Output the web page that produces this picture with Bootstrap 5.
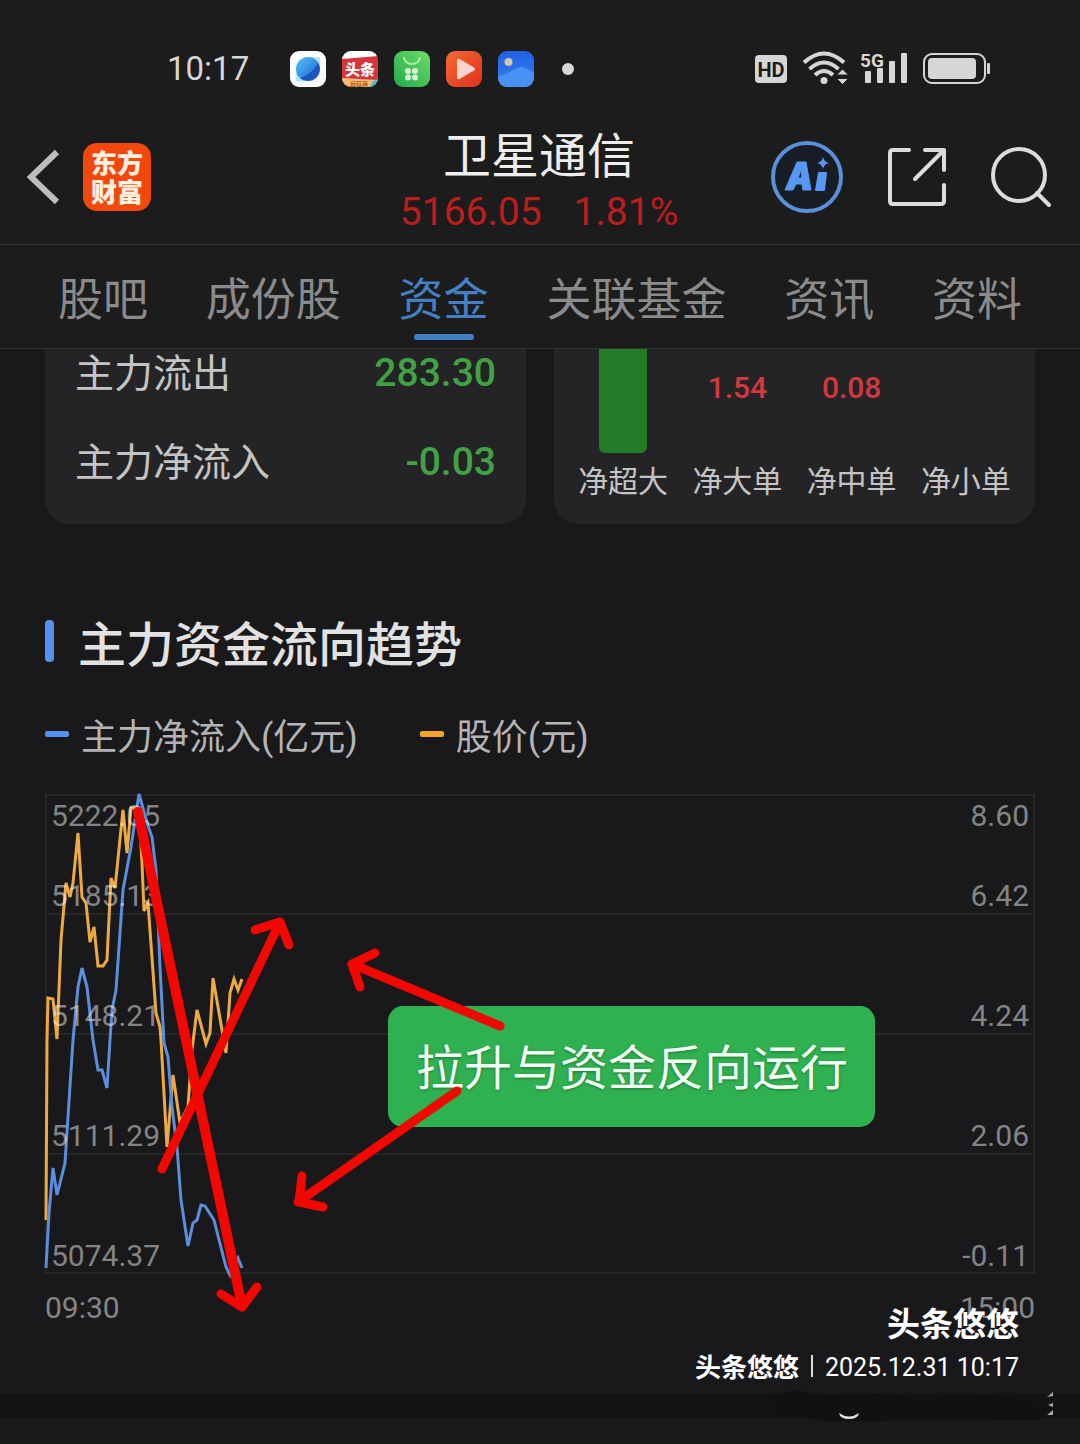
<!DOCTYPE html>
<html lang="zh-CN" data-bs-theme="dark">
<head>
<meta charset="utf-8">
<meta name="viewport" content="width=device-width, initial-scale=1">
<title>卫星通信</title>
<link href="https://cdn.jsdelivr.net/npm/bootstrap@5.3.0/dist/css/bootstrap.min.css" rel="stylesheet">
<style>
  :root { --edge: 45px; --line: #323230; --green: #41a244; --red: #d4383f; }
  body { font-family: Roboto, "Noto Sans CJK SC", sans-serif; background: #19191b; color: #c4c4c4; min-height: 100vh; line-height: 1.2; }
  button { background: none; border: 0; padding: 0; color: inherit; }
  svg { display: block; flex: none; overflow: visible; }
  .top-shell { background: #1c1c1c; }
  .status-row { height: 110px; padding: 28px 90px 0 167px; color: #d6d6d6; }
  .status-time { font-size: 33px; width: 123px; }
  .app-bar { height: 135px; padding: 0 28px 0 26px; border-bottom: 1px solid var(--line); }
  .side-slot { flex: 1 1 0; }
  .tool-slot { gap: 43px; }
  .brand-tile { width: 68px; height: 68px; border-radius: 14px; background: #f2480c; color: #fff1e2; font-size: 26px; font-weight: 900; line-height: 29px; padding-top: 3px; }
  .quote-block { padding-top: 14px; }
  .quote-name { font-size: 48px; line-height: 56px; color: #eee; font-weight: 400; }
  .quote-nums { font-size: 39px; line-height: 54px; color: #bd1d1d; gap: 32px; }
  .tab-row { height: 104px; padding: 0 58px; border-bottom: 1px solid var(--line); }
  .tab-row a { font-size: 45px; line-height: 54px; color: #8b8b8d; text-decoration: none; position: relative; padding-top: 29px; }
  .tab-row a.active { color: #4580c4; }
  .tab-row a.active::after { content: ""; position: absolute; left: 50%; bottom: 8px; width: 60px; height: 6px; margin-left: -30px; border-radius: 3px; background: #3f7fc4; }
  .panels { display: grid; grid-template-columns: 1fr 1fr; gap: 28px; padding: 0 var(--edge); }
  .panel { background: #242426; border-radius: 0 0 24px 24px; height: 175px; }
  .flow-list { padding: 0 30px; font-size: 39px; line-height: 48px; gap: 41px; }
  .flow-list dt { padding-top: 2px; line-height: 46px; font-weight: 400; }
  .flow-list dd { color: var(--green); font-weight: 500; }
  .order-bars { padding: 0 12px; }
  .order-item { flex: 1 1 0; font-size: 30px; line-height: 38px; }
  .order-plot { height: 114px; }
  .order-plot span { color: var(--red); font-weight: 500; padding-top: 20px; }
  .bar-down { width: 48px; height: 104px; border-radius: 0 0 6px 6px; background: #247c28; }
  .trend { padding: 93px var(--edge) 0; }
  .trend h2 { font-size: 48px; line-height: 58px; font-weight: 500; color: #e2e2e2; gap: 24px; }
  .trend h2::before { content: ""; width: 9px; height: 42px; border-radius: 4px; background: #5590ee; margin-top: -10px; }
  .legend-row { font-size: 36px; line-height: 44px; gap: 62px; margin-top: 41px; color: #b4b4b6; }
  .legend-row span { gap: 12px; }
  .legend-row span::before { content: ""; width: 24px; height: 6px; border-radius: 2px; background: var(--key); margin-top: -8px; }
  .key-flow { --key: #5590ee; }
  .key-price { --key: #f2a52d; }
  .plot { height: 478px; margin-top: 35px; color: #ffffff78; font-size: 30px; line-height: 36px; }
  .plot svg { width: 100%; height: 100%; }
  .scale-col { position: absolute; top: 3px; bottom: 0; padding: 0 6px; z-index: 1; }
  .scale-col span + span { margin-top: 84px; }
  .scale-col span:nth-child(2) { margin-top: 44px; }
  .callout { position: absolute; z-index: 1; left: 343px; top: 211px; padding: 34px 27px 29px 28px; border-radius: 15px; background: #30b151; color: #f2fff4; font-size: 48px; line-height: 58px; text-shadow: 0 1px 3px #0005; white-space: nowrap; }
  .marks { position: absolute; left: 0; top: 0; z-index: 2; }
  .time-row { font-size: 30px; line-height: 36px; margin-top: 17px; color: #858587; }
  .stamp { position: absolute; right: 61px; bottom: 30px; color: #fff; font-weight: 700; font-size: 33px; line-height: 46px; }
  .stamp-line { font-size: 26px; line-height: 40px; gap: 12px; }
  .stamp-line time { font-weight: 400; font-size: 25px; }
  .stamp-rule { width: 2px; height: 22px; background: #ddd; margin-top: -4px; }
  .divider { height: 24px; margin-top: 68px; background: #131313; }
  .divider svg { position: absolute; right: 20px; top: -8px; }
</style>
</head>
<body>
<header class="top-shell">
  <div class="status-row d-flex align-items-center">
    <div class="status-time">10:17</div>
    <svg width="288" height="36" viewBox="0 0 288 36" aria-hidden="true">
      <defs>
        <linearGradient id="g1" x1="0" y1="0" x2="1" y2="1"><stop stop-color="#5bc3f8"/><stop offset=".6" stop-color="#2e86e2"/><stop offset="1" stop-color="#1746a8"/></linearGradient>
        <linearGradient id="g2" x1="1" y1="0" x2="0" y2="1"><stop stop-color="#6fdc63"/><stop offset="1" stop-color="#22aa50"/></linearGradient>
        <linearGradient id="g3" x1="0" y1="0" x2="1" y2="1"><stop stop-color="#f46a31"/><stop offset="1" stop-color="#e1301d"/></linearGradient>
        <linearGradient id="g4" x1="0" y1="0" x2="0" y2="1"><stop stop-color="#1f5fe6"/><stop offset="1" stop-color="#3b82ee"/></linearGradient>
        <clipPath id="c1"><rect x="52" width="36" height="36" rx="9"/></clipPath>
        <clipPath id="c2"><rect x="208" width="36" height="36" rx="9"/></clipPath>
      </defs>
      <rect width="36" height="36" rx="9" fill="#fafcff"/>
      <path d="M6 30c-1-4 0-7 0-12A12 12 0 0 1 18 6c5 0 8 0 12 0 0 4 0 8 0 12a12 12 0 0 1-12 12c-5 0-8 1-12 0z" fill="#b8e2fb"/>
      <circle cx="18" cy="18" r="12" fill="url(#g1)"/><path d="M10 27Q23 23 28 12A12 12 0 0 1 10 27z" fill="#1c55bc"/>
      <g clip-path="url(#c1)"><rect x="52" width="36" height="36" fill="#d7343c"/><path d="M52 0h36v5l-36 3z" fill="#fff"/><path d="M52 27l36 2v7H52z" fill="#f3bd75"/><path d="M80 36q2-7 8-8v8z" fill="#53b7d1"/></g>
      <text x="70" y="24" text-anchor="middle" font-size="15" font-weight="900" fill="#fff">头条</text>
      <text x="69" y="35" text-anchor="middle" font-size="6" font-weight="700" fill="#a55c23">远征商</text>
      <rect x="104" width="36" height="36" rx="9" fill="url(#g2)"/><path d="M114 6a8 7 0 0 0 16 0" fill="none" stroke="#a8f2a8" stroke-width="2"/>
      <g fill="#d3f7d4"><circle cx="118" cy="20" r="3"/><circle cx="125" cy="20" r="3"/><circle cx="118" cy="26.500" r="3"/><circle cx="125" cy="26.500" r="3"/></g>
      <rect x="156" width="36" height="36" rx="9" fill="url(#g3)"/><path d="M167 9.500Q167 7 169.500 8L184 16.500q2 1.500 0 3L169.500 28Q167 29 167 26.500z" fill="#fcd6cc"/>
      <g clip-path="url(#c2)"><rect x="208" width="36" height="36" fill="url(#g4)"/><path d="M208 25c10-1 17-9 23-9 5 0 8 4 13 5v15h-36z" fill="#4a91f6"/><circle cx="218.500" cy="11" r="4" fill="#d4c5a5"/></g>
      <circle cx="278" cy="18" r="6" fill="#d6d6d6"/>
    </svg>
    <svg class="ms-auto" width="236" height="40" viewBox="0 -2 236 40" fill="#d6d6d6" aria-label="HD 5G">
      <rect x="1" y="4" width="32" height="28" rx="4"/>
      <text x="17" y="26" text-anchor="middle" font-size="20" font-weight="700" fill="#1c1c1c">HD</text>
      <g fill="none" stroke="#d6d6d6" stroke-width="4"><path d="M50 11.500q20-18 40 0"/><path d="M55.500 18q14.500-13 29 0"/><path d="M61 24q9-8 18 0"/></g>
      <circle cx="70" cy="29.500" r="3.500"/>
      <path d="M82.500 24l6-6 6 6zM82.500 27.500l6 6 6-6z" stroke="#1c1c1c" stroke-width="1"/>
      <rect x="111" y="20" width="6" height="12" rx="1"/><rect x="123" y="17" width="6" height="15" rx="1"/><rect x="135" y="10" width="6" height="22" rx="1"/><rect x="147" y="2" width="6" height="30" rx="1"/>
      <text x="106" y="16" font-size="19" font-weight="700" stroke="#1c1c1c" stroke-width="2" paint-order="stroke">5G</text>
      <rect x="170" y="3" width="61" height="29" rx="8" fill="none" stroke="#d6d6d6" stroke-width="2"/>
      <rect x="174" y="7" width="48" height="21" rx="4"/><rect x="233" y="12" width="3" height="11" rx="1"/>
    </svg>
  </div>

  <div class="app-bar d-flex align-items-center">
    <div class="side-slot d-flex align-items-center gap-4">
      <button type="button" aria-label="返回"><svg width="33" height="56" viewBox="0 0 33 56" fill="none" stroke="#bdbdbd" stroke-width="6"><path d="M31 3L5 28l26 25"/></svg></button>
      <div class="brand-tile d-flex flex-column align-items-center justify-content-center"><span>东方</span><span>财富</span></div>
    </div>
    <div class="quote-block text-center">
      <h1 class="quote-name m-0">卫星通信</h1>
      <div class="quote-nums d-flex justify-content-center"><span>5166.05</span><span>1.81%</span></div>
    </div>
    <div class="side-slot tool-slot d-flex align-items-center justify-content-end">
      <button type="button" aria-label="Ai"><svg width="74" height="74" viewBox="0 0 74 74"><circle cx="37" cy="37" r="34" fill="#181c24" stroke="#5a8fda" stroke-width="4"/><g fill="#5797f5" stroke="#5797f5" stroke-linejoin="round"><path fill-rule="evenodd" d="M15 50L27 22h9l5 28h-8l-1-6h-6l-3 6zM28 38h4l-1-8z" stroke-width="1"/><path d="M49 33h7l-2 17h-8z" stroke-width="2"/><path d="M53 17q1 5 6 6-5 1-6 6-1-5-6-6 5-1 6-6z" stroke-width="0"/></g></svg></button>
      <button type="button" aria-label="分享"><svg width="60" height="60" viewBox="0 0 60 60" fill="none" stroke="#dcdcdc" stroke-width="4" stroke-linecap="round" stroke-linejoin="round"><path d="M22 3H6Q3 3 3 6v48q0 3 3 3h48q3 0 3-3V38M38 3h19v20M57 3L28 32"/></svg></button>
      <button type="button" aria-label="搜索"><svg width="62" height="62" viewBox="0 0 62 62" fill="none" stroke="#dcdcdc" stroke-width="4" stroke-linecap="round"><circle cx="29" cy="29" r="26"/><path d="M47 47l12 12"/></svg></button>
    </div>
  </div>

  <nav class="tab-row d-flex justify-content-between">
    <a href="#">股吧</a><a href="#">成份股</a><a href="#" class="active" aria-current="page">资金</a><a href="#">关联基金</a><a href="#">资讯</a><a href="#">资料</a>
  </nav>
</header>

<main>
  <section class="panels">
    <dl class="panel flow-list d-flex flex-column m-0">
      <div class="d-flex justify-content-between"><dt>主力流出</dt><dd class="m-0">283.30</dd></div>
      <div class="d-flex justify-content-between"><dt>主力净流入</dt><dd class="m-0">-0.03</dd></div>
    </dl>
    <div class="panel order-bars d-flex">
      <div class="order-item text-center"><div class="order-plot d-flex justify-content-center"><div class="bar-down"></div></div>净超大</div>
      <div class="order-item text-center"><div class="order-plot d-flex justify-content-center"><span>1.54</span></div>净大单</div>
      <div class="order-item text-center"><div class="order-plot d-flex justify-content-center"><span>0.08</span></div>净中单</div>
      <div class="order-item text-center"><div class="order-plot"></div>净小单</div>
    </div>
  </section>

  <section class="trend">
    <h2 class="d-flex align-items-center m-0">主力资金流向趋势</h2>
    <div class="legend-row d-flex">
      <span class="key-flow d-flex align-items-center">主力净流入(亿元)</span>
      <span class="key-price d-flex align-items-center">股价(元)</span>
    </div>
    <div class="plot position-relative">
      <div class="scale-col start-0 d-flex flex-column"><span>5222.05</span><span>5185.13</span><span>5148.21</span><span>5111.29</span><span>5074.37</span></div>
      <div class="scale-col end-0 d-flex flex-column text-end"><span>8.60</span><span>6.42</span><span>4.24</span><span>2.06</span><span>-0.11</span></div>
      <svg viewBox="45 795 990 478" preserveAspectRatio="xMinYMin meet" fill="none" aria-hidden="true">
        <path d="M46 795H1034V1273H46zM46 914H1034M46 1034H1034M46 1154H1034" stroke="#262628" stroke-width="2"/>
        <polyline stroke="#edaa42" stroke-width="3" points="46,1220 47,1040 48,998 53,999 57,1039 61,940 66,883 70,897 73,883 78,833 82,897 86,903 90,942 94,927 98,966 103,966 107,960 111,878 115,888 123,810 127,853 131,808 139,808 142,863 144,911 148,903 156,1013 160,1027 161,1040 167,1147 173,1075 180,1123 188,1107 192,1050 197,1010 206,1044 210,1033 213,978 226,1053 230,993 234,979 238,990 242,979"/>
        <polyline stroke="#5b8edb" stroke-width="3" points="46,1268 49,1213 53,1168 57,1195 65,1163 73,1040 78,987 82,968 87,987 93,1040 98,1070 102,1070 107,1088 110,1040 112,1010 116,990 123,890 131,847 139,794 147,823 152,837 156,870 160,967 164,1043 168,1057 172,1107 177,1147 181,1200 188,1246 193,1223 197,1220 201,1205 205,1206 214,1220 226,1267 230,1275 238,1258 242,1268"/>
      </svg>
      <div class="callout">拉升与资金反向运行</div>
      <svg class="marks" viewBox="45 795 990 478" preserveAspectRatio="xMinYMin meet" fill="none" stroke="#f20800" stroke-width="9" stroke-linecap="round" stroke-linejoin="round" aria-hidden="true">
        <path stroke-width="10" d="M138 812L242 1306"/>
        <path d="M221 1294l21 13 15-20M162 1169L280 922M255 930l25-8 9 23"/>
        <path d="M500 1026L352 964M375 953l-23 11 8 23M457 1091L298 1202M302 1176l-3 26 24 5"/>
      </svg>
    </div>
    <div class="time-row d-flex justify-content-between">
      <span>09:30</span><span>15:00</span>
    </div>
  </section>
  <div class="divider position-relative">
    <svg width="300" height="38" viewBox="0 0 300 38" aria-hidden="true"><path d="M12 10l25-6 30 7 50-4 45 8 40-6 55 4 30 8-8 13-210 1-52-8z" fill="#111112"/><path d="M79 27q10 7 20 0-1 6-10 6t-10-6z" fill="#ddd"/><path d="M287 11l6-5v4zM288 19l5-2v4zM287 29l6-5v5z" fill="#aaa"/></svg>
    <div class="stamp text-end text-nowrap">头条悠悠
      <div class="stamp-line d-flex align-items-center"><span>头条悠悠</span><i class="stamp-rule"></i><time datetime="2025-12-31T10:17">2025.12.31 10:17</time></div>
    </div>
  </div>
</main>
<script src="https://cdn.jsdelivr.net/npm/bootstrap@5.3.0/dist/js/bootstrap.bundle.min.js"></script>
</body>
</html>
